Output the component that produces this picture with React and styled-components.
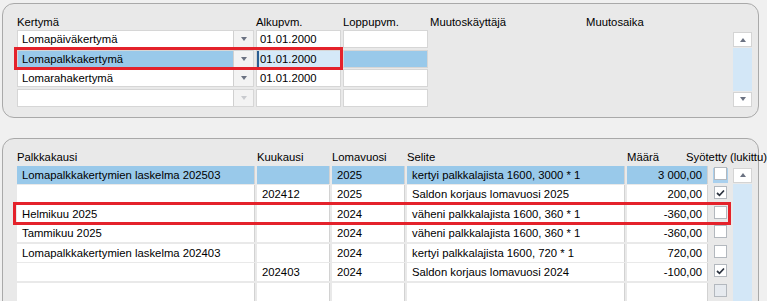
import React from 'react';
import styled, { createGlobalStyle } from 'styled-components';

const GlobalStyle = createGlobalStyle`
  html, body { margin: 0; padding: 0; background: #f0f0f0; overflow: hidden; }
  body { font-family: "Liberation Sans", Arial, sans-serif; font-size: 11.3px; color: #000; }
`;

const Page = styled.div`
  width: 767px;
  height: 301px;
  box-sizing: border-box;
  padding: 3px 0 0 2px;
  overflow: hidden;
`;

const Panel = styled.section`
  position: relative;
  width: 757px;
  box-sizing: border-box;
  background: #e9e9e9;
  border: 1px solid #a9a9a9;
  border-radius: 12px;
`;

const TopPanel = styled(Panel)`
  height: 115px;
  padding: 6.5px 6px 0 14px;
`;

const BottomPanel = styled(Panel)`
  margin-top: 20px;
  height: 185px;
  padding: 7px 6px 0 14px;
`;

const TopGrid = styled.div`
  display: grid;
  grid-template-columns: 237px 85px 85px 154px 1fr 19px;
  grid-template-rows: 18px repeat(4, 18px);
  column-gap: 2px;
  row-gap: 1.5px;
`;

const BottomGrid = styled.div`
  display: grid;
  grid-template-columns: 238px 73px 73px 218px 81px 21px 19px;
  grid-template-rows: 18px repeat(8, 18px);
  column-gap: 2px;
  row-gap: 1.5px;
`;

const HeadLabel = styled.div`
  align-self: end;
  line-height: 14px;
  white-space: nowrap;
  grid-column: ${p => p.$col || 'auto'};
  margin-left: ${p => p.$shift || 0}px;
`;

const Combo = styled.div`
  display: flex;
  box-sizing: border-box;
  border: 1px solid #d6d6d6;
  background: ${p => (p.$selected ? '#99c9ea' : '#fff')};
  grid-column: 1;
`;

const ComboField = styled.div`
  flex: 1;
  padding-left: 4px;
  line-height: 16px;
  white-space: nowrap;
`;

const ComboArrow = styled.div`
  width: 19px;
  background: #f3f3f3;
  border-left: 1px solid #d0d0d0;
  display: flex;
  align-items: center;
  justify-content: center;
  &::after {
    content: '';
    border-left: 3.5px solid transparent;
    border-right: 3.5px solid transparent;
    border-top: 4px solid ${p => (p.$disabled ? '#c9cbcf' : '#6b7282')};
  }
`;

const DateCell = styled.div`
  box-sizing: border-box;
  border: 1px solid #d6d6d6;
  background: ${p => p.$bg || '#fff'};
  padding-left: 3px;
  line-height: 16px;
  white-space: nowrap;
  box-shadow: ${p => (p.$caret ? 'inset 2px 0 0 #2b5e93' : 'none')};
`;

const Scrollbar = styled.div`
  grid-column: ${p => p.$col};
  grid-row: ${p => p.$rows};
  margin-top: 2px;
  display: flex;
  flex-direction: column;
  gap: 1px;
`;

const ScrollBtn = styled.div`
  height: 15px;
  flex: none;
  box-sizing: border-box;
  background: #fff;
  border: 1px solid #d4d4d4;
  display: flex;
  align-items: center;
  justify-content: center;
  &::after {
    content: '';
    border-left: 3.5px solid transparent;
    border-right: 3.5px solid transparent;
    ${p => (p.$dir === 'up' ? 'border-bottom: 4px solid #6b7282;' : 'border-top: 4px solid #6b7282;')}
  }
`;

const Track = styled.div`
  flex: 1;
  background: #d3e7f7;
`;

const Cell = styled.div`
  background: ${p => (p.$selected ? '#99c9ea' : '#fff')};
  border-right: 1px solid #d2d2d2;
  line-height: 18px;
  padding: ${p => (p.$right ? '0 5px 0 0' : '0 0 0 5px')};
  text-align: ${p => (p.$right ? 'right' : 'left')};
  white-space: nowrap;
  overflow: hidden;
`;

const CheckCell = styled.div`
  display: flex;
  justify-content: center;
  align-items: flex-start;
  padding-top: 1px;
`;

const CheckBox = styled.span`
  width: 13px;
  height: 13px;
  box-sizing: border-box;
  border: 1px solid #b3b8be;
  background: ${p => (p.$disabled ? '#e6eaef' : '#fff')};
  box-shadow: ${p => (p.$selected ? '0 2px 0 1px #a9d0ee' : 'none')};
  display: flex;
  align-items: center;
  justify-content: center;
`;

const Annotation = styled.div`
  position: absolute;
  box-sizing: border-box;
  border: 3px solid #e4222b;
  pointer-events: none;
  left: ${p => p.$left}px;
  top: ${p => p.$top}px;
  width: ${p => p.$width}px;
  height: ${p => p.$height}px;
`;

const Tick = () => (
  <svg width="9" height="8" viewBox="0 0 9 8">
    <path d="M1 4 L3.5 6.3 L8 1.5" fill="none" stroke="#2d3440" strokeWidth="1.7" />
  </svg>
);

const kertymat = [
  { name: 'Lomapäiväkertymä', start: '01.01.2000' },
  { name: 'Lomapalkkakertymä', start: '01.01.2000', selected: true },
  { name: 'Lomarahakertymä', start: '01.01.2000' },
  { name: '', start: '', empty: true },
];

const rivit = [
  { kausi: 'Lomapalkkakertymien laskelma 202503', kk: '', vuosi: '2025', selite: 'kertyi palkkalajista 1600, 3000 * 1', maara: '3 000,00', selected: true },
  { kausi: '', kk: '202412', vuosi: '2025', selite: 'Saldon korjaus lomavuosi 2025', maara: '200,00', checked: true },
  { kausi: 'Helmikuu 2025', kk: '', vuosi: '2024', selite: 'väheni palkkalajista 1600, 360 * 1', maara: '-360,00' },
  { kausi: 'Tammikuu 2025', kk: '', vuosi: '2024', selite: 'väheni palkkalajista 1600, 360 * 1', maara: '-360,00' },
  { kausi: 'Lomapalkkakertymien laskelma 202403', kk: '', vuosi: '2024', selite: 'kertyi palkkalajista 1600, 720 * 1', maara: '720,00' },
  { kausi: '', kk: '202403', vuosi: '2024', selite: 'Saldon korjaus lomavuosi 2024', maara: '-100,00', checked: true },
  { kausi: '', kk: '', vuosi: '', selite: '', maara: '', disabled: true },
  { kausi: '', kk: '', vuosi: '', selite: '', maara: '', none: true },
];

export default function App() {
  return (
    <Page>
      <GlobalStyle />
      <TopPanel>
        <TopGrid>
          <HeadLabel>Kertymä</HeadLabel>
          <HeadLabel>Alkupvm.</HeadLabel>
          <HeadLabel>Loppupvm.</HeadLabel>
          <HeadLabel>Muutoskäyttäjä</HeadLabel>
          <HeadLabel>Muutosaika</HeadLabel>
          <div />
          {kertymat.map((k, i) => (
            <React.Fragment key={i}>
              <Combo $selected={k.selected}>
                <ComboField>{k.name}</ComboField>
                <ComboArrow $disabled={k.empty} />
              </Combo>
              <DateCell $bg={k.selected ? '#d5e9f8' : '#fff'} $caret={k.selected}>{k.start}</DateCell>
              <DateCell $bg={k.selected ? '#99c9ea' : '#fff'} />
            </React.Fragment>
          ))}
          <Scrollbar $col={6} $rows="2 / 6">
            <ScrollBtn $dir="up" />
            <Track />
            <ScrollBtn $dir="down" />
          </Scrollbar>
        </TopGrid>
        <Annotation $left={11} $top={43} $width={329} $height={23} />
      </TopPanel>

      <BottomPanel>
        <BottomGrid>
          <HeadLabel>Palkkakausi</HeadLabel>
          <HeadLabel>Kuukausi</HeadLabel>
          <HeadLabel>Lomavuosi</HeadLabel>
          <HeadLabel>Selite</HeadLabel>
          <HeadLabel>Määrä</HeadLabel>
          <HeadLabel $col="6 / 8" $shift={-24}>Syötetty (lukittu)</HeadLabel>
          {rivit.map((r, i) => (
            <React.Fragment key={i}>
              <Cell $selected={r.selected}>{r.kausi}</Cell>
              <Cell $selected={r.selected}>{r.kk}</Cell>
              <Cell $selected={r.selected}>{r.vuosi}</Cell>
              <Cell $selected={r.selected}>{r.selite}</Cell>
              <Cell $selected={r.selected} $right>{r.maara}</Cell>
              <CheckCell>
                {!r.none && (
                  <CheckBox $selected={r.selected} $disabled={r.disabled}>
                    {r.checked && <Tick />}
                  </CheckBox>
                )}
              </CheckCell>
            </React.Fragment>
          ))}
          <Scrollbar $col={7} $rows="2 / 10">
            <ScrollBtn $dir="up" />
            <Track />
          </Scrollbar>
        </BottomGrid>
        <Annotation $left={10} $top={62.5} $width={718} $height={23.5} />
      </BottomPanel>
    </Page>
  );
}
